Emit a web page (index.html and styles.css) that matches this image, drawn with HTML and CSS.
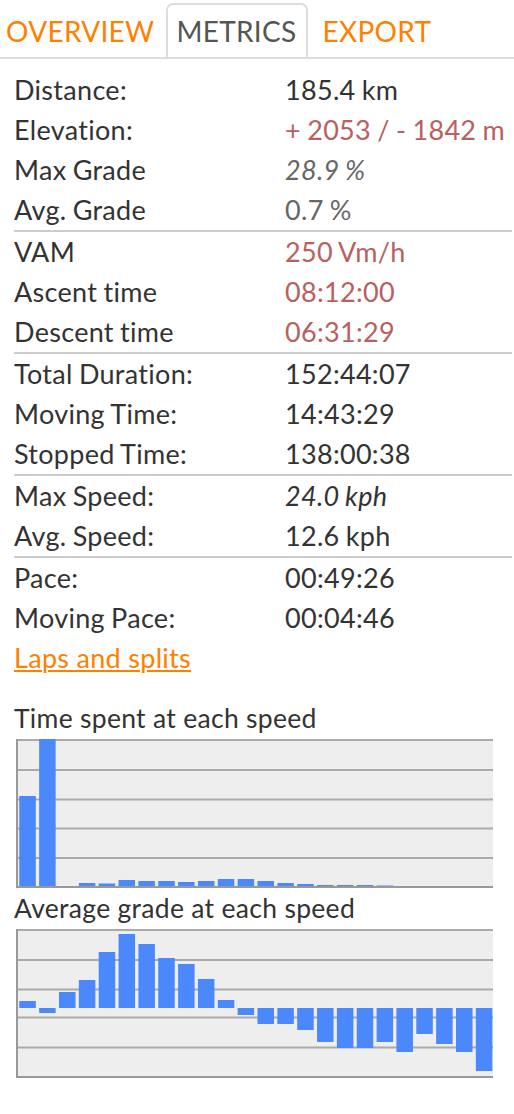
FILE: index.html
```html
<!DOCTYPE html>
<html lang="en">
<head>
<meta charset="utf-8">
<title>Metrics</title>
<link rel="stylesheet" href="styles.css">
</head>
<body>
<nav class="tabs">
  <a class="tab">OVERVIEW</a>
  <a class="tab active">METRICS</a>
  <a class="tab">EXPORT</a>
</nav>

<section class="metrics">
  <div class="group">
    <div class="row"><span class="label">Distance:</span><span class="value">185.4 km</span></div>
    <div class="row"><span class="label">Elevation:</span><span class="value red">+ 2053 / - 1842 m</span></div>
    <div class="row"><span class="label">Max Grade</span><span class="value muted italic">28.9 %</span></div>
    <div class="row"><span class="label">Avg. Grade</span><span class="value muted">0.7 %</span></div>
  </div>
  <div class="group">
    <div class="row"><span class="label">VAM</span><span class="value red">250 Vm/h</span></div>
    <div class="row"><span class="label">Ascent time</span><span class="value red">08:12:00</span></div>
    <div class="row"><span class="label">Descent time</span><span class="value red">06:31:29</span></div>
  </div>
  <div class="group">
    <div class="row"><span class="label">Total Duration:</span><span class="value">152:44:07</span></div>
    <div class="row"><span class="label">Moving Time:</span><span class="value">14:43:29</span></div>
    <div class="row"><span class="label">Stopped Time:</span><span class="value">138:00:38</span></div>
  </div>
  <div class="group">
    <div class="row"><span class="label">Max Speed:</span><span class="value italic">24.0 kph</span></div>
    <div class="row"><span class="label">Avg. Speed:</span><span class="value">12.6 kph</span></div>
  </div>
  <div class="group">
    <div class="row"><span class="label">Pace:</span><span class="value">00:49:26</span></div>
    <div class="row"><span class="label">Moving Pace:</span><span class="value">00:04:46</span></div>
  </div>
  <div class="links"><a class="link" href="#laps">Laps and splits</a></div>

  <div class="chart-block first">
    <h3 class="chart-title">Time spent at each speed</h3>
    <svg class="chart" width="477" height="149" viewBox="0 0 477 149">
      <rect class="plot" x="0" y="0" width="477" height="149"/>
      <g class="grid">
        <line x1="0" y1="1" x2="477" y2="1"/>
        <line x1="0" y1="31" x2="477" y2="31"/>
        <line x1="0" y1="60.5" x2="477" y2="60.5"/>
        <line x1="0" y1="89.5" x2="477" y2="89.5"/>
        <line x1="0" y1="119" x2="477" y2="119"/>
      </g>
      <g class="bars">
        <rect x="3.3" y="57" width="16.5" height="91"/>
        <rect x="23.15" y="0" width="16.5" height="148"/>
        <rect x="43" y="147" width="16.5" height="1"/>
        <rect x="62.85" y="144" width="16.5" height="4"/>
        <rect x="82.7" y="144.5" width="16.5" height="3.5"/>
        <rect x="102.55" y="141" width="16.5" height="7"/>
        <rect x="122.4" y="142" width="16.5" height="6"/>
        <rect x="142.25" y="142" width="16.5" height="6"/>
        <rect x="162.1" y="143" width="16.5" height="5"/>
        <rect x="181.95" y="142" width="16.5" height="6"/>
        <rect x="201.8" y="140" width="16.5" height="8"/>
        <rect x="221.65" y="140" width="16.5" height="8"/>
        <rect x="241.5" y="142" width="16.5" height="6"/>
        <rect x="261.35" y="144" width="16.5" height="4"/>
        <rect x="281.2" y="145" width="16.5" height="3"/>
        <rect x="301.05" y="146" width="16.5" height="2"/>
        <rect x="320.9" y="146" width="16.5" height="2"/>
        <rect x="340.75" y="146" width="16.5" height="2"/>
        <rect x="360.6" y="146.5" width="16.5" height="1.5"/>
        <rect x="380.45" y="147" width="16.5" height="1"/>
      </g>
      <g class="axis">
        <line x1="1" y1="0" x2="1" y2="149"/>
        <line x1="0" y1="148" x2="477" y2="148"/>
      </g>
    </svg>
  </div>

  <div class="chart-block">
    <h3 class="chart-title">Average grade at each speed</h3>
    <svg class="chart" width="477" height="149" viewBox="0 0 477 149">
      <rect class="plot" x="0" y="0" width="477" height="149"/>
      <g class="grid">
        <line x1="0" y1="1" x2="477" y2="1"/>
        <line x1="0" y1="31" x2="477" y2="31"/>
        <line x1="0" y1="60.5" x2="477" y2="60.5"/>
        <line x1="0" y1="88.5" x2="477" y2="88.5"/>
        <line x1="0" y1="118.5" x2="477" y2="118.5"/>
      </g>
      <g class="bars">
        <rect x="3.3" y="72" width="16.5" height="7"/>
        <rect x="23.15" y="79" width="16.5" height="5"/>
        <rect x="43" y="63" width="16.5" height="16"/>
        <rect x="62.85" y="51" width="16.5" height="28"/>
        <rect x="82.7" y="23" width="16.5" height="56"/>
        <rect x="102.55" y="5" width="16.5" height="74"/>
        <rect x="122.4" y="15" width="16.5" height="64"/>
        <rect x="142.25" y="29" width="16.5" height="50"/>
        <rect x="162.1" y="35" width="16.5" height="44"/>
        <rect x="181.95" y="50" width="16.5" height="29"/>
        <rect x="201.8" y="71" width="16.5" height="8"/>
        <rect x="221.65" y="79" width="16.5" height="7"/>
        <rect x="241.5" y="79" width="16.5" height="16"/>
        <rect x="261.35" y="79" width="16.5" height="16"/>
        <rect x="281.2" y="79" width="16.5" height="22"/>
        <rect x="301.05" y="79" width="16.5" height="34"/>
        <rect x="320.9" y="79" width="16.5" height="40"/>
        <rect x="340.75" y="79" width="16.5" height="40"/>
        <rect x="360.6" y="79" width="16.5" height="34"/>
        <rect x="380.45" y="79" width="16.5" height="44"/>
        <rect x="400.3" y="79" width="16.5" height="26"/>
        <rect x="420.15" y="79" width="16.5" height="36"/>
        <rect x="440" y="79" width="16.5" height="44"/>
        <rect x="459.85" y="79" width="16.5" height="63"/>
      </g>
      <g class="axis">
        <line x1="1" y1="0" x2="1" y2="149"/>
        <line x1="0" y1="148" x2="477" y2="148"/>
      </g>
    </svg>
  </div>
</section>
</body>
</html>
```

FILE: styles.css
```css
html, body {
  margin: 0;
  padding: 0;
  background: #ffffff;
}

body {
  font-family: Lato, "Open Sans", "Liberation Sans", sans-serif;
  color: #333333;
  width: 514px;
}

/* Tabs */
.tabs {
  display: flex;
  padding: 3px 0 0 6px;
  border-bottom: 2px solid #dddddd;
  height: 54px;
}

.tab {
  display: block;
  font-size: 28px;
  letter-spacing: 0.3px;
  line-height: 52px;
  padding: 0 8px 2px 8px;
  margin-right: 4px;
  border: 2px solid transparent;
  border-bottom: none;
  border-radius: 7px 7px 0 0;
  color: #ff7f00;
  cursor: pointer;
}

.tab:first-child {
  padding-left: 0;
  border-left: none;
  margin-right: 2px;
}

.tab.active {
  color: #555555;
  background: #ffffff;
  border-color: #dddddd;
  padding-right: 10px;
  margin-right: 4px;
}

/* Metrics */
.metrics {
  margin: 11px 2px 0 14px;
}

.group + .group {
  border-top: 2px solid #cccccc;
}

.row {
  display: grid;
  grid-template-columns: 271px 1fr;
  font-size: 27px;
  letter-spacing: 0.3px;
  word-spacing: -1px;
  line-height: 40px;
  white-space: nowrap;
}

.value.red {
  color: #b86060;
}

.value.muted {
  color: #666666;
}

.value.italic {
  font-style: italic;
}

.links {
  font-size: 27px;
  letter-spacing: 0.3px;
  line-height: 40px;
}

.link {
  color: #ff7f00;
  text-decoration: underline;
  text-decoration-thickness: 2px;
  text-underline-offset: 2px;
}

/* Charts */
.chart-block {
  margin-top: 5px;
}

.chart-block.first {
  margin-top: 25px;
}

.chart-title {
  margin: 0;
  font-size: 26.5px;
  letter-spacing: 0.3px;
  line-height: 30px;
  font-weight: normal;
  color: #333333;
}

.chart {
  display: block;
  margin: 6px 0 0 2px;
}

.chart .plot {
  fill: #eeeeee;
}

.chart .grid line {
  stroke: #aaaaaa;
  stroke-width: 2;
}

.chart .bars rect {
  fill: #4a88fb;
}

.chart .axis line {
  stroke: #999999;
  stroke-width: 2;
}
```
